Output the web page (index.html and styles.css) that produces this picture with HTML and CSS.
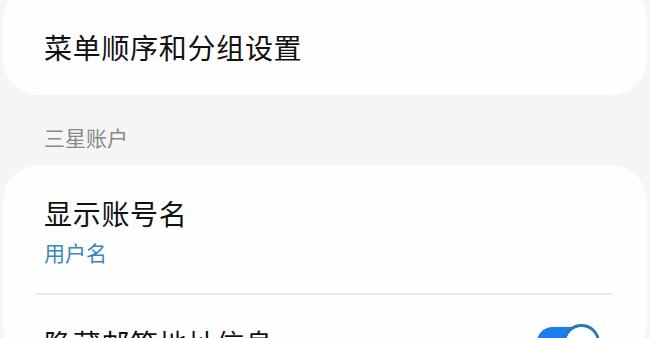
FILE: index.html
```html
<!DOCTYPE html>
<html lang="zh-CN">
<head>
    <meta charset="UTF-8">
    <meta name="viewport" content="width=device-width, initial-scale=1.0">
    <title>设置</title>
    <link rel="stylesheet" href="styles.css">
</head>
<body>
    <div class="page">
        <div class="card card-first">
            <div class="row">
                <div class="row-title">菜单顺序和分组设置</div>
            </div>
        </div>

        <div class="section-label">三星账户</div>

        <div class="card">
            <div class="row row-account">
                <div class="row-title">显示账号名</div>
                <div class="row-sub">用户名</div>
            </div>
            <div class="divider"></div>
            <div class="row row-switch">
                <div class="row-title">隐藏邮箱地址信息</div>
                <div class="switch on">
                    <span class="switch-track"></span>
                    <span class="switch-thumb"></span>
                </div>
            </div>
        </div>
    </div>
</body>
</html>
```

FILE: styles.css
```css
body {
    margin: 0;
    background-color: #f5f5f5;
    font-family: 'Noto Sans CJK SC', 'Noto Sans', sans-serif;
    color: #111;
    overflow: hidden;
}
.page {
    padding: 0 3px;
}
.card {
    background: #fefefe;
    border-radius: 36px;
}
.card-first {
    margin-top: -17px;
}
.card-first .row {
    padding-top: 47px;
    padding-bottom: 31px;
}
.row {
    padding: 0 47px 0 41px;
}
.row-title {
    font-size: 28px;
    line-height: 34px;
    letter-spacing: 0.7px;
}
.row-sub {
    font-size: 21px;
    line-height: 28px;
    color: #3787bf;
    margin-top: 8px;
}
.section-label {
    font-size: 21px;
    line-height: 28px;
    color: #888;
    padding: 28px 0 14px 41px;
}
.row-account {
    padding-top: 31px;
    padding-bottom: 27px;
}
.divider {
    height: 2px;
    background: #e8e8e8;
    margin: 0 34px 0 33px;
}
.row-switch {
    display: flex;
    justify-content: space-between;
    align-items: center;
    padding-top: 29px;
}
.switch {
    position: relative;
    width: 63px;
    height: 37px;
    flex-shrink: 0;
}
.switch-track {
    position: absolute;
    left: 0;
    top: 3px;
    width: 52px;
    height: 31px;
    border-radius: 16px;
    background: #1a7fec;
}
.switch-thumb {
    position: absolute;
    right: 0;
    top: 0;
    width: 31px;
    height: 31px;
    border-radius: 50%;
    background: #fff;
    border: 3px solid #2a78c4;
}
```
